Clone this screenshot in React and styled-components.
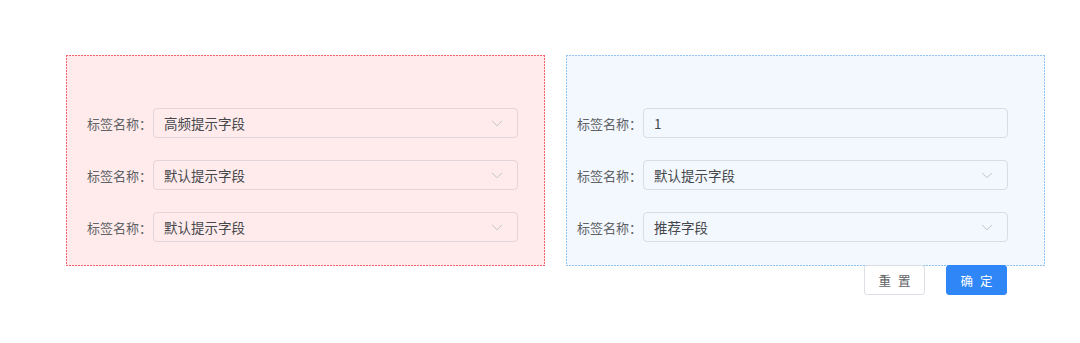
import React from 'react';
import styled, { createGlobalStyle } from 'styled-components';

const GlobalStyle = createGlobalStyle`
  body {
    margin: 0;
    background: #ffffff;
    font-family: "Noto Sans CJK SC", "Noto Sans", sans-serif;
  }
`;

const leftRows = [
  { value: '高频提示字段', kind: 'select' },
  { value: '默认提示字段', kind: 'select' },
  { value: '默认提示字段', kind: 'select' },
];

const rightRows = [
  { value: '1', kind: 'input' },
  { value: '默认提示字段', kind: 'select' },
  { value: '推荐字段', kind: 'select' },
];

const tones = {
  red: { bg: '#ffebeb', dot: '#f4636d' },
  blue: { bg: '#f3f7fe', dot: '#92c5f5' },
};

const Chevron = () => (
  <svg width="12" height="12" viewBox="0 0 12 12" fill="none">
    <path d="M1 3.8l5 5 5-5" stroke="#c0c4cc" strokeWidth="1" />
  </svg>
);

const Panel = ({ rows, tone, inset }) => (
  <PanelBox tone={tone} inset={inset}>
    {rows.map((row, i) => (
      <FormRow key={i}>
        <Label>标签名称：</Label>
        <Field>
          <FieldText>{row.value}</FieldText>
          {row.kind === 'select' && <Chevron />}
        </Field>
      </FormRow>
    ))}
  </PanelBox>
);

const App = () => (
  <>
    <GlobalStyle />
    <Page>
      <Panels>
        <Panel rows={leftRows} tone="red" inset={21} />
        <Panel rows={rightRows} tone="blue" inset={11} />
      </Panels>
      <Actions>
        <Button>重 置</Button>
        <Button primary>确 定</Button>
      </Actions>
    </Page>
  </>
);

const Page = styled.div`
  width: 1080px;
  height: 343px;
  box-sizing: border-box;
  padding: 55px 0 0 66px;
`;

const Panels = styled.div`
  display: flex;
  gap: 21px;
`;

const PanelBox = styled.div`
  width: 479px;
  height: 211px;
  box-sizing: border-box;
  padding: 53px 0 0 ${(p) => p.inset}px;
  display: flex;
  flex-direction: column;
  gap: 22px;
  background:
    linear-gradient(90deg, ${(p) => tones[p.tone].dot} 2px, transparent 0) top left / 3px 1px repeat-x,
    linear-gradient(90deg, ${(p) => tones[p.tone].dot} 2px, transparent 0) bottom left / 3px 1px repeat-x,
    linear-gradient(180deg, ${(p) => tones[p.tone].dot} 2px, transparent 0) top left / 1px 3px repeat-y,
    linear-gradient(180deg, ${(p) => tones[p.tone].dot} 2px, transparent 0) top right / 1px 3px repeat-y,
    ${(p) => tones[p.tone].bg};
`;

const FormRow = styled.div`
  display: flex;
  align-items: center;
  height: 30px;
`;

const Label = styled.span`
  width: 66px;
  font-size: 13px;
  color: #606266;
  white-space: nowrap;
`;

const Field = styled.div`
  width: 365px;
  height: 30px;
  box-sizing: border-box;
  padding: 0 14px 0 10px;
  display: flex;
  align-items: center;
  justify-content: space-between;
  border: 1px solid rgba(170, 170, 185, 0.35);
  border-radius: 4px;
`;

const FieldText = styled.span`
  font-size: 13.5px;
  color: #45474b;
`;

const Actions = styled.div`
  width: 941px;
  display: flex;
  justify-content: flex-end;
  gap: 21px;
  margin-top: -1px;
`;

const Button = styled.button`
  width: 61px;
  height: 30px;
  padding: 0;
  border-radius: 3px;
  font-family: inherit;
  font-size: 12.5px;
  letter-spacing: 2px;
  text-indent: 2px;
  border: 1px solid ${(p) => (p.primary ? '#2f86f6' : '#dcdfe6')};
  background: ${(p) => (p.primary ? '#2f86f6' : '#ffffff')};
  color: ${(p) => (p.primary ? '#ffffff' : '#606266')};
`;

export default App;
